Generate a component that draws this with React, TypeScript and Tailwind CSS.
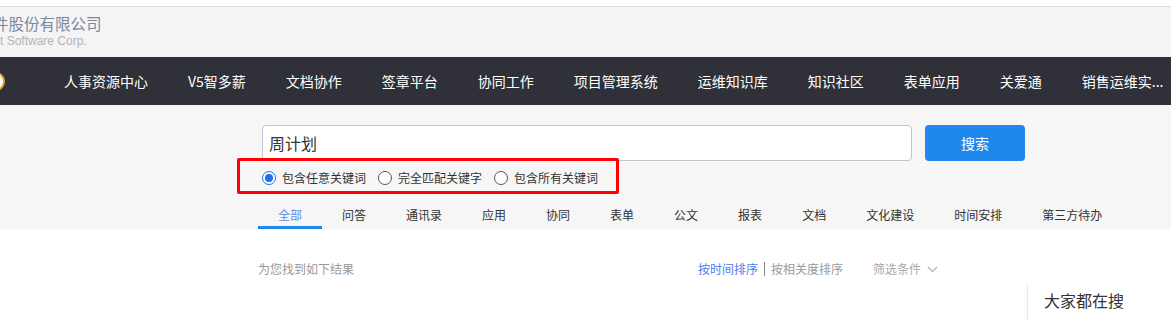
import { useState } from "react";

const navItems = [
  "人事资源中心",
  "V5智多薪",
  "文档协作",
  "签章平台",
  "协同工作",
  "项目管理系统",
  "运维知识库",
  "知识社区",
  "表单应用",
  "关爱通",
  "销售运维实...",
];

const tabs = ["全部", "问答", "通讯录", "应用", "协同", "表单", "公文", "报表", "文档", "文化建设", "时间安排", "第三方待办"];

const modes = ["包含任意关键词", "完全匹配关键字", "包含所有关键词"];

const cjk = "font-['Microsoft_YaHei','Noto_Sans_CJK_SC',sans-serif]";

function Radio({ checked }: { checked: boolean }) {
  return checked ? (
    <span className="w-[14px] h-[14px] rounded-full border border-[#1a73e8] flex items-center justify-center bg-white">
      <span className="w-[8px] h-[8px] rounded-full bg-[#1a73e8]" />
    </span>
  ) : (
    <span className="w-[14px] h-[14px] rounded-full border border-[#555] bg-white" />
  );
}

export default function App() {
  const [mode, setMode] = useState(0);
  const [tab, setTab] = useState(0);

  return (
    <div className={`w-[1171px] h-[320px] overflow-hidden bg-white ${cjk}`}>
      {/* top header */}
      <div className="h-[6px] bg-white" />
      <div className="h-[1px] bg-[#dcdcdc]" />
      <div className="h-[50px] bg-[#f4f4f5] flex flex-col pt-[5px] overflow-hidden">
        <div className="text-[15.5px] leading-[22px] text-[#7d879a] -ml-[7px] whitespace-nowrap">件股份有限公司</div>
        <div className="text-[12px] leading-[14px] text-[#b3b3b3] font-['Liberation_Sans',sans-serif] whitespace-nowrap">
          t Software Corp.
        </div>
      </div>

      {/* nav */}
      <div className="h-[48px] bg-[#2f3038] flex items-center overflow-hidden">
        <span className="w-[19px] h-[19px] shrink-0 rounded-full bg-white border-2 border-[#f0a030] -ml-[14px]" />
        <ul className="flex items-center gap-10 ml-[59px] whitespace-nowrap">
          {navItems.map((n) => (
            <li key={n} className="text-white text-[14px] leading-[20px]">
              {n}
            </li>
          ))}
        </ul>
      </div>

      {/* search area */}
      <div className="relative bg-[#f6f6f6] pt-[20px] pl-[258px]">
        <div className="flex">
          <div className="ml-[4px] w-[650px] h-[36px] bg-white border border-[#c4c3d0] rounded-[4px] flex items-center px-[6px] text-[16px] text-[#333]">
            周计划
          </div>
          <button className="ml-[13px] w-[100px] h-[36px] rounded-[4px] bg-[#2188eb] text-white text-[14px]">搜索</button>
        </div>

        <div className="flex items-center ml-[4px] mt-[9px] h-[16px] gap-[12px]">
          {modes.map((m, i) => (
            <label key={m} className="flex items-center gap-[6px] cursor-pointer" onClick={() => setMode(i)}>
              <Radio checked={mode === i} />
              <span className="text-[12px] leading-[16px] text-[#333]">{m}</span>
            </label>
          ))}
        </div>

        <div className="flex mt-[19px]">
          {tabs.map((t, i) => (
            <div
              key={t}
              onClick={() => setTab(i)}
              className={`h-[24px] px-5 pt-[2px] text-[12px] leading-[16px] border-b-[3px] cursor-pointer ${
                tab === i ? "border-[#2188eb] text-[#5b8def]" : "border-transparent text-[#333]"
              }`}
            >
              {t}
            </div>
          ))}
        </div>

        {/* annotation box */}
        <div className="absolute left-[237px] top-[53px] w-[382px] h-[36px] border-[3px] border-[#ff0000] rounded-[2px]" />
      </div>

      {/* results */}
      <div className="flex pl-[258px]">
        <div className="w-[769px] pt-[32px]">
          <div className="flex items-center text-[12px] leading-[16px]">
            <span className="w-[440px] text-[#999]">为您找到如下结果</span>
            <span className="text-[#4a80f0]">按时间排序</span>
            <span className="mx-[6px] w-[1px] h-[14px] bg-[#888]" />
            <span className="text-[#999]">按相关度排序</span>
            <span className="ml-[30px] text-[#aaa] flex items-center gap-[6px]">
              筛选条件
              <svg width="11" height="7" viewBox="0 0 11 7" fill="none">
                <path d="M1 1l4.5 4.5L10 1" stroke="#aaa" strokeWidth="1.1" />
              </svg>
            </span>
          </div>
        </div>
        <div className="mt-[55px] h-[40px] border-l border-[#e8e8ec] pl-[16px] pt-[6px]">
          <div className="text-[16px] leading-[20px] text-[#333] whitespace-nowrap">大家都在搜</div>
        </div>
      </div>
    </div>
  );
}
